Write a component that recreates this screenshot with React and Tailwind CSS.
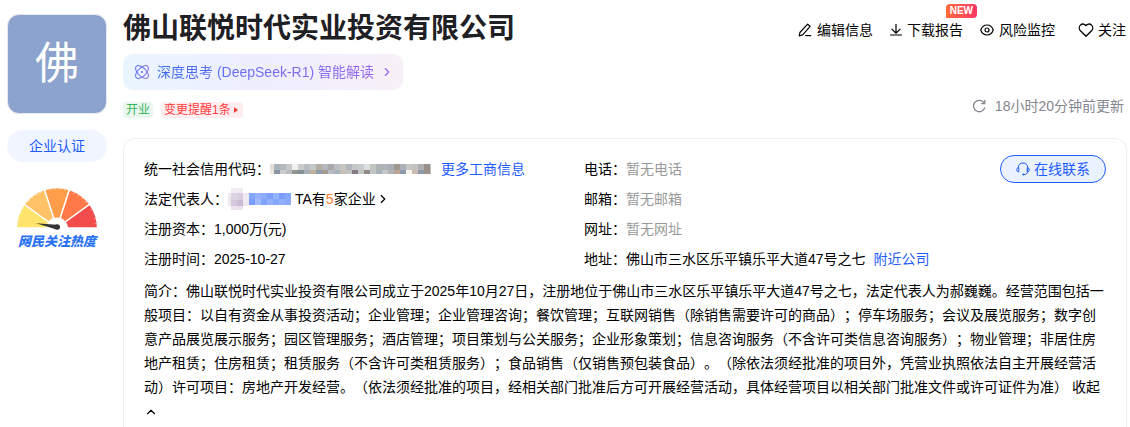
import { useState } from 'react';
import { ChevronRight, ChevronUp } from 'lucide-react';

const actions = [
  { name: '编辑信息', icon: EditIcon },
  { name: '下载报告', icon: DownloadIcon, badge: 'NEW' },
  { name: '风险监控', icon: EyeIcon },
];

const contacts = [
  { label: '电话', value: '暂无电话' },
  { label: '邮箱', value: '暂无邮箱' },
  { label: '网址', value: '暂无网址' },
];

const intro =
  '简介：佛山联悦时代实业投资有限公司成立于2025年10月27日，注册地位于佛山市三水区乐平镇乐平大道47号之七，法定代表人为郝巍巍。经营范围包括一般项目：以自有资金从事投资活动；企业管理；企业管理咨询；餐饮管理；互联网销售（除销售需要许可的商品）；停车场服务；会议及展览服务；数字创意产品展览展示服务；园区管理服务；酒店管理；项目策划与公关服务；企业形象策划；信息咨询服务（不含许可类信息咨询服务）；物业管理；非居住房地产租赁；住房租赁；租赁服务（不含许可类租赁服务）；食品销售（仅销售预包装食品）。（除依法须经批准的项目外，凭营业执照依法自主开展经营活动）许可项目：房地产开发经营。（依法须经批准的项目，经相关部门批准后方可开展经营活动，具体经营项目以相关部门批准文件或许可证件为准）';

// masked credit code, two rows of colour cells
const codeCells = [
  ['#e6ddd6', '#aab4bc', '#b3babd', '#c5c9ca', '#f1f0ec', '#c9cdcf', '#b9bdc1', '#c3c8c9', '#b5ad9f', '#b4b9c0', '#a9a9ae', '#bac0c2', '#c6c5c0', '#b0b6bb', '#c4c8c8', '#c9ccce', '#dcdfdf', '#bfc4bd', '#aeb3b3', '#b1b3bc', '#a9adb4', '#a0988f', '#aeb1b8', '#c5cac6', '#c4c2be', '#aeaeb3', '#9b8f89', '#c1c5c8'],
  ['#efe6dc', '#8a94a3', '#c8cccc', '#b8bcbd', '#91938f', '#858f96', '#a5b0b8', '#bdb2a0', '#8f9cae', '#a69a93', '#b7bcbf', '#a9b4c0', '#c5bfb7', '#c3c5c4', '#837a83', '#c3c7c2', '#938b87', '#c3c6c9', '#a9b0b9', '#c3c9c9', '#b1b3b8', '#b9a695', '#8c98ab', '#f8f6ec', '#cdbdb0', '#8e98ad', '#9c938f', '#b9bec1'],
];

const nameCells = ['#84a6ff', '#97b1ff', '#8caeff', '#7f9eff', '#92b3ff', '#7c9cff', '#86a8ff'];
const nameCellsLow = ['#7b9cff', '#a0bbff', '#7fa2ff', '#94b1ff', '#85a6ff', '#91afff', '#8aa9ff'];

export default function App() {
  const [expanded, setExpanded] = useState(true);

  return (
    <div className="flex items-start gap-4 bg-white pl-[7px] pr-[3px] font-['Liberation_Sans','Noto_Sans_CJK_SC',sans-serif] text-sm text-black [text-spacing-trim:space-all]">
      <Sidebar />

      <main className="min-w-0 flex-1">
        {/* Company header */}
        <header className="flex justify-between pt-2">
          <div>
            <h1 className="text-[28px] leading-[42px] font-bold text-[#1f2024]">佛山联悦时代实业投资有限公司</h1>
            <a
              href="#deepseek"
              className="mt-1 flex h-9 w-fit items-center rounded-[10px] bg-linear-to-r from-[#eaf5ff] via-[#eeeefe] to-[#f8f0f8] pr-[9px] pl-3"
            >
              <AtomIcon />
              <span className="ml-2 bg-linear-to-r from-[#3b6cf0] to-[#9a68f0] bg-clip-text leading-5 text-transparent">
                深度思考 (DeepSeek-R1) 智能解读
              </span>
              <ChevronRight className="ml-1.5 h-3.5 w-3.5 text-[#9a68f0]" />
            </a>
            <div className="mt-3 flex gap-2 text-xs leading-4">
              <span className="rounded-[3px] bg-[#e9f7ef] px-[3px] text-[#35b558]">开业</span>
              <a href="#changes" className="flex items-center gap-[3px] rounded-[3px] bg-[#ffeef0] pr-1 pl-[3px] text-[#ff3b3b]">
                变更提醒1条
                <svg className="mr-px h-[6px] w-1" viewBox="0 0 4 6" fill="currentColor">
                  <path d="M0 0l4 3-4 3z" />
                </svg>
              </a>
            </div>
          </div>

          <div className="flex flex-col items-end justify-between">
            <div className="flex gap-[17px] pt-3">
              {actions.map(({ name, icon: Icon, badge }) => (
                <button key={name} className="relative flex items-center gap-[5px] leading-5">
                  <Icon />
                  {name}
                  {badge && (
                    <span className="absolute -top-4 -right-3.5 rounded-t-[4px] rounded-br-[4px] bg-linear-to-r from-[#ff6a35] to-[#ff3366] px-1 text-[10px] leading-[14px] font-bold text-white">
                      {badge}
                    </span>
                  )}
                </button>
              ))}
              <button className="ml-1.5 flex items-center gap-1 pr-px leading-5">
                <HeartIcon />
                关注
              </button>
            </div>
            <button className="mb-0.5 flex items-center gap-2 pr-[3px] leading-5 text-[#85868f]">
              <RefreshIcon />
              18小时20分钟前更新
            </button>
          </div>
        </header>

        {/* Registration details */}
        <section className="mt-5 rounded-t-xl border border-b-0 border-[#edeef5] px-5 pt-[15px] pb-4">
          <div className="flex leading-[30px]">
            <dl className="w-[440px] shrink-0">
              <Row label="统一社会信用代码">
                <CodeMask />
                <a href="#more" className="ml-[10px] text-[#1f5cff]">更多工商信息</a>
              </Row>
              <Row label="法定代表人">
                <NameMask />
                <a href="#companies" className="ml-1 flex items-center">
                  TA有<span className="text-[#ff7a2e]">5</span>家企业
                  <ChevronRight className="h-3.5 w-3.5" />
                </a>
              </Row>
              <Row label="注册资本">1,000万(元)</Row>
              <Row label="注册时间">2025-10-27</Row>
            </dl>
            <dl className="min-w-0 flex-1">
              {contacts.map(({ label, value }) => (
                <Row key={label} label={label}>
                  <span className="text-[#999999]">{value}</span>
                </Row>
              ))}
              <Row label="地址">
                佛山市三水区乐平镇乐平大道47号之七
                <a href="#nearby" className="ml-2 text-[#1f5cff]">附近公司</a>
              </Row>
            </dl>
            <button className="mt-px flex h-7 shrink-0 items-center gap-1 self-start rounded-full border border-[#1f5cff] bg-[#eaf1ff] px-[15px] leading-5 text-[#1f5cff]">
              <HeadsetIcon />
              在线联系
            </button>
          </div>
          <p className="mt-[5px] leading-6">
            {expanded ? intro : `${intro.slice(0, 60)}...`}{' '}
            <button onClick={() => setExpanded(!expanded)} className="inline text-left">
              {expanded ? '收起' : '展开'}
            </button>
            <ChevronUp className={`inline h-3.5 w-3.5 ${expanded ? '' : 'rotate-180'}`} />
          </p>
        </section>
      </main>
    </div>
  );
}

function Sidebar() {
  return (
    <aside className="flex w-[100px] shrink-0 flex-col items-center pt-3.5">
      <div className="flex h-[100px] w-full items-center justify-center rounded-xl border border-[#e4e8f2] bg-[#8ca3cd] text-[44px] leading-none text-white">
        佛
      </div>
      <button className="mt-4 h-8 w-full rounded-full bg-[#f0f5ff] text-[#1f5cff]">企业认证</button>
      <a href="#heat" className="mt-[25px] flex flex-col items-center">
        <Gauge />
        <span className="text-[13px] leading-[18px] font-black text-[#2b73f5] italic">网民关注热度</span>
      </a>
    </aside>
  );
}

function Row({ label, children }) {
  return (
    <div className="flex h-[30px]">
      <dt>{label}：</dt>
      <dd className="flex items-center">{children}</dd>
    </div>
  );
}

function CodeMask() {
  return (
    <svg width="161" height="10" viewBox="0 0 161 10" shapeRendering="crispEdges">
      {codeCells.map((row, y) =>
        row.map((fill, x) => <rect key={`${x}-${y}`} x={x * 6 - 2} y={y * 6} width="6" height="6" fill={fill} />)
      )}
    </svg>
  );
}

function NameMask() {
  return (
    <svg className="-mt-px" width="63" height="22" viewBox="0 0 63 22" shapeRendering="crispEdges">
      <path d="M3 0h12v6H3z" fill="#f2edf5" />
      <path d="M-3 5h6v13h-6z" fill="#eee8f3" />
      <path d="M3 5h6v7H3z" fill="#dcd3e3" />
      <path d="M9 5h6v7H9z" fill="#d8cee0" />
      <path d="M3 12h6v6H3z" fill="#d3c8dc" />
      <path d="M9 12h6v6H9z" fill="#cabdd6" />
      <path d="M15 5h6v13h-6z" fill="#f0eaf3" />
      <path d="M3 18h12v4H3z" fill="#ebe4ef" />
      {nameCells.map((fill, i) => (
        <rect key={i} x={21 + i * 6} y="5" width="6" height="6" fill={fill} />
      ))}
      {nameCellsLow.map((fill, i) => (
        <rect key={i} x={21 + i * 6} y="11" width="6" height="6" fill={fill} />
      ))}
    </svg>
  );
}

function Gauge() {
  return (
    <svg width="82" height="46" viewBox="0 0 82 46">
      <g stroke="#fff" strokeWidth="1.4">
        <path d="M41 41H0.5A40.5 40.5 0 0 1 8.2 17.2z" fill="#ffe36b" />
        <path d="M41 41L8.2 17.2A40.5 40.5 0 0 1 28.5 2.5z" fill="#ffc266" />
        <path d="M41 41L28.5 2.5A40.5 40.5 0 0 1 53.5 2.5z" fill="#ff9d4a" />
        <path d="M41 41L53.5 2.5A40.5 40.5 0 0 1 73.8 17.2z" fill="#ff7847" />
        <path d="M41 41L73.8 17.2A40.5 40.5 0 0 1 81.5 41z" fill="#f34c4c" />
      </g>
      <path d="M2 41A39 39 0 0 1 80 41" fill="none" stroke="#fff" strokeOpacity="0.6" strokeWidth="2" strokeDasharray="0.7 4.2" />
      <path d="M30 41.5a11 11 0 0 1 22 0z" fill="#fff" />
      <path d="M20 36.3l20.5 1.500v4.600z" fill="#333" />
      <circle cx="41.2" cy="40" r="2.8" fill="#333" />
    </svg>
  );
}

function AtomIcon() {
  return (
    <svg width="14" height="14" viewBox="0 0 14 14" fill="none" stroke="url(#atom)" strokeWidth="1">
      <defs>
        <linearGradient id="atom" x1="0" y1="0" x2="14" y2="14" gradientUnits="userSpaceOnUse">
          <stop stopColor="#4a78f2" />
          <stop offset="1" stopColor="#9b6cf2" />
        </linearGradient>
      </defs>
      <ellipse cx="7" cy="7" rx="8" ry="4.2" transform="rotate(45 7 7)" />
      <ellipse cx="7" cy="7" rx="8" ry="4.2" transform="rotate(-45 7 7)" />
      <circle cx="7" cy="7" r="1" fill="#6a72f2" stroke="none" />
    </svg>
  );
}

function EditIcon() {
  return (
    <svg width="14" height="14" viewBox="0 0 14 14" fill="none" stroke="currentColor" strokeWidth="1.2" strokeLinejoin="round">
      <path d="M9.6 1.2l2.5 2.1-7.4 8.6-3.5 1 .7-3.4z" />
      <path d="M7.2 12.6h6" />
    </svg>
  );
}

function DownloadIcon() {
  return (
    <svg width="12" height="14" viewBox="0 0 12 14" fill="none" stroke="currentColor" strokeWidth="1.2">
      <path d="M6 1v9M1.6 5.8L6 10.2l4.4-4.4M0 12h12" />
    </svg>
  );
}

function EyeIcon() {
  return (
    <svg width="14" height="14" viewBox="0 0 14 14" fill="none" stroke="currentColor" strokeWidth="1.2">
      <path d="M.7 7C2 3.6 4.2 2 7 2s5 1.6 6.3 5C12 10.4 9.8 12 7 12S2 10.4.7 7z" />
      <circle cx="7" cy="7" r="2" />
    </svg>
  );
}

function HeartIcon() {
  return (
    <svg width="16" height="14" viewBox="0 0 16 14" fill="none" stroke="currentColor" strokeWidth="1.3" strokeLinejoin="round">
      <path d="M8 2.6C6.7.8 4.2.5 2.6 1.9 1 3.4.8 5.9 2.2 7.5L8 13.2l5.8-5.7C15.2 5.9 15 3.4 13.4 1.9 11.8.5 9.3.8 8 2.6z" />
    </svg>
  );
}

function RefreshIcon() {
  return (
    <svg width="15" height="14" viewBox="0 0 15 14" fill="none" stroke="currentColor" strokeWidth="1.3">
      <path d="M12.8 8.3A5.7 5.7 0 1 1 12.2 4.2" />
      <path d="M12.8 1v3.7H9.2" />
    </svg>
  );
}

function HeadsetIcon() {
  return (
    <svg width="14" height="14" viewBox="0 0 14 14" fill="none" stroke="currentColor" strokeWidth="1">
      <path d="M2.3 6V5.5C2.3 2.8 4.3 1 7 1s4.7 1.8 4.7 4.5V9.5c0 1.7-1.5 3-3.7 3" />
      <path d="M2.8 5.7v4.2C1.5 9.9.7 9 .7 7.8s.8-2.1 2.1-2.1zM11.2 5.7v4.2c1.3 0 2.1-.9 2.1-2.1s-.8-2.1-2.1-2.1z" />
      <circle cx="7.3" cy="12.5" r="1" fill="currentColor" stroke="none" />
    </svg>
  );
}
